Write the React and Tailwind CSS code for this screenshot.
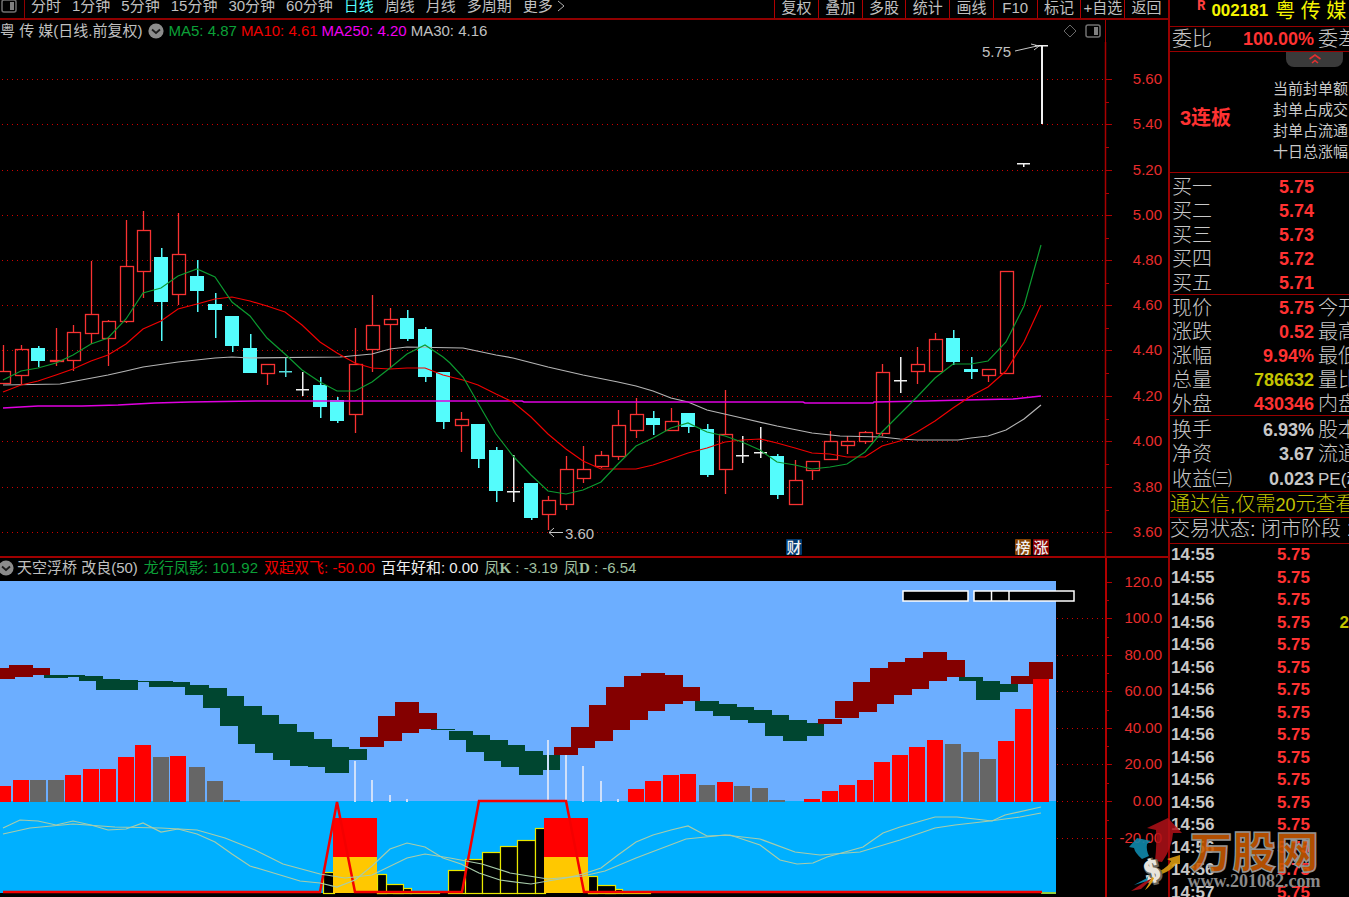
import React from "react";

const X = [
  3, 21, 38, 56, 73, 91, 108, 126, 143, 161, 178, 197, 215, 232, 250, 267, 285, 302, 320, 337,
  355, 372, 390, 407, 425, 443, 461, 478, 496, 513, 531, 548, 566, 583, 601, 618, 636, 653, 671, 688,
  707, 725, 742, 760, 777, 795, 812, 830, 847, 865, 882, 900, 917, 935, 953, 971, 988, 1006, 1023, 1041,
];

// kind, high, body top, body bottom, low
const CANDLES = [
  ["r", 345, 371, 383, 384], ["r", 345, 349, 375, 384], ["c", 346, 348, 361, 367], ["r", 328, 360, 361, 366],
  ["r", 325, 332, 360, 371], ["r", 261, 314, 333, 344], ["r", 320, 321, 338, 366], ["r", 220, 266, 321, 323],
  ["r", 211, 230, 271, 298], ["c", 248, 257, 302, 341], ["r", 213, 254, 294, 305], ["c", 260, 276, 291, 312],
  ["c", 293, 304, 310, 338], ["c", 316, 316, 346, 352], ["c", 334, 348, 373, 373], ["r", 364, 364, 373, 385],
  ["x", 358, 371, 372, 377], ["w", 372, 389, 389, 396], ["c", 377, 385, 407, 418], ["c", 397, 400, 421, 423],
  ["r", 328, 364, 414, 433], ["r", 295, 325, 349, 372], ["r", 308, 319, 324, 368], ["c", 310, 318, 339, 341],
  ["c", 327, 329, 377, 382], ["c", 372, 372, 422, 429], ["r", 412, 419, 425, 452], ["c", 424, 424, 459, 468],
  ["c", 447, 450, 491, 502], ["w", 455, 491, 491, 502], ["c", 483, 483, 518, 520], ["r", 496, 500, 514, 530],
  ["r", 456, 469, 504, 510], ["r", 446, 469, 478, 483], ["r", 451, 455, 466, 468], ["r", 410, 425, 456, 460],
  ["r", 398, 414, 430, 438], ["c", 411, 418, 425, 435], ["r", 408, 421, 430, 430], ["c", 413, 413, 427, 433],
  ["c", 424, 429, 475, 477], ["r", 390, 434, 469, 494], ["w", 436, 455, 455, 463], ["w", 427, 452, 452, 458],
  ["c", 454, 456, 495, 499], ["r", 460, 480, 504, 504], ["r", 461, 461, 470, 480], ["r", 431, 441, 459, 459],
  ["r", 436, 441, 445, 454], ["r", 431, 432, 441, 444], ["r", 364, 372, 433, 436], ["w", 357, 380, 380, 393],
  ["r", 347, 364, 371, 384], ["r", 333, 339, 371, 371], ["c", 330, 338, 362, 365], ["c", 357, 369, 372, 379],
  ["r", 369, 369, 375, 382], ["r", 271, 271, 373, 373], ["w", 163, 163, 163, 167], ["w", 45, 45, 45, 124],
];

const MA5 =
  "3,380 21,371 38,368 56,363 73,355 91,344 108,338 126,319 143,293 161,288 178,276 197,269 215,277 232,302 250,316 267,338 285,354 302,370 320,382 337,391 355,391 372,382 390,368 407,354 425,345 443,357 450,363 463,377 478,403 496,434 513,456 531,475 548,491 566,494 583,490 601,482 618,464 636,446 653,438 671,428 688,423 707,432 725,436 742,442 760,450 777,462 795,465 812,469 830,467 847,464 865,452 882,432 900,414 917,397 935,378 953,364 971,364 988,361 1006,342 1024,306 1041,245";
const MA10 =
  "3,392 21,385 38,381 56,375 73,369 91,361 108,355 126,344 143,329 161,321 178,309 197,304 215,299 232,297 250,301 267,306 285,312 302,325 320,342 337,353 355,363 372,368 390,369 407,368 425,368 443,375 463,380 478,385 496,394 513,402 531,417 548,434 566,449 583,461 601,469 636,469 653,465 671,459 688,453 707,448 725,442 742,440 760,439 777,443 795,448 812,453 830,454 847,457 865,457 882,446 900,441 917,432 935,421 953,408 971,396 988,387 1006,371 1024,342 1041,305";
const MA30 =
  "3,385 60,384 108,375 126,371 143,367 178,362 215,358 232,357 250,358 340,357 372,354 390,349 407,347 463,348 496,355 513,358 548,367 583,375 618,382 636,386 653,391 671,398 688,402 707,410 742,418 777,426 812,433 840,436 882,437 900,439 917,440 958,440 971,438 988,436 1006,430 1024,419 1041,405";
const MA250 =
  "3,408 38,406 82,406 118,405 155,403 190,402 258,401 522,401 524,402 803,402 805,403 873,403 874,402 926,401 965,400 1013,399 1041,396";

const PRICE_TICKS = [
  [79, "5.60"], [124, "5.40"], [170, "5.20"], [215, "5.00"], [260, "4.80"], [305, "4.60"],
  [350, "4.40"], [396, "4.20"], [441, "4.00"], [487, "3.80"], [532, "3.60"],
];
const IND_TICKS = [
  [582, "120.0"], [618, "100.0"], [655, "80.00"], [691, "60.00"], [728, "40.00"], [764, "20.00"], [801, "0.00"], [838, "-20.00"],
];

// colour (r = maroon, g = dark green), top, bottom
const BRIDGE = [
  ["r", 668, 679], ["r", 665, 677], ["r", 668, 675], ["g", 675, 678], ["g", 675, 677], ["g", 676, 681], ["g", 679, 690],
  ["g", 680, 690], ["g", 681, 682], ["g", 681, 687], ["g", 682, 687], ["g", 685, 695], ["g", 688, 708], ["g", 696, 726],
  ["g", 706, 744], ["g", 715, 753], ["g", 724, 760], ["g", 732, 766], ["g", 739, 767], ["g", 747, 773], ["g", 749, 760],
  ["r", 737, 747], ["r", 716, 741], ["r", 702, 733], ["r", 713, 729], ["g", 729, 730], ["g", 731, 740], ["g", 735, 752],
  ["g", 740, 761], ["g", 745, 767], ["g", 751, 775], ["g", 755, 770], ["r", 747, 755], ["r", 727, 748], ["r", 705, 741],
  ["r", 687, 730], ["r", 676, 720], ["r", 673, 711], ["r", 675, 704], ["r", 687, 701], ["g", 701, 711], ["g", 704, 716],
  ["g", 707, 720], ["g", 710, 723], ["g", 715, 736], ["g", 720, 741], ["g", 723, 736], ["r", 719, 724], ["r", 701, 718],
  ["r", 682, 712], ["r", 668, 704], ["r", 662, 695], ["r", 658, 689], ["r", 652, 681], ["r", 660, 677], ["g", 677, 681],
  ["g", 681, 700], ["g", 684, 692], ["r", 676, 684], ["r", 662, 679],
];

// candle index, colour, top
const BARS = [
  [0, "r", 786], [1, "r", 780], [2, "g", 780], [3, "g", 780], [4, "r", 775], [5, "r", 769], [6, "r", 769], [7, "r", 757],
  [8, "r", 745], [9, "g", 757], [10, "r", 756], [11, "g", 767], [12, "g", 781], [13, "g", 800],
  [36, "r", 789], [37, "r", 781], [38, "r", 775], [39, "r", 774], [40, "g", 785], [41, "r", 782], [42, "g", 786],
  [43, "g", 788], [44, "g", 800], [46, "r", 799], [47, "r", 791], [48, "r", 785], [49, "r", 780], [50, "r", 762],
  [51, "r", 755], [52, "r", 747], [53, "r", 740], [54, "g", 744], [55, "g", 752], [56, "g", 759], [57, "r", 741],
  [58, "r", 709], [59, "r", 679],
];

const STICKS = [
  [355, 761], [372, 780], [390, 795], [407, 799], [548, 740], [566, 755], [583, 766], [601, 781], [618, 799],
];

// x, width, top of the black steps
const STEPS = [
  [323, 11, 872], [410, 29, 891], [393, 18, 888], [377, 26, 884], [377, 9, 874],
  [448, 17, 870], [465, 17, 859], [482, 18, 852], [500, 17, 846], [517, 18, 840], [535, 10, 828],
  [622, 28, 891], [605, 17, 889], [588, 27, 885], [588, 9, 876],
];

const K_LINE =
  "3,828 20,820 38,821 56,825 73,821 91,825 108,830 126,829 143,823 161,832 178,829 197,834 215,842 232,854 250,866 267,871 300,881 320,883 337,887 355,880 372,866 390,849 407,843 425,847 443,858 461,864 479,873 500,880 531,884 548,881 566,878 583,874 601,868 618,855 636,842 653,835 671,830 688,826 707,836 730,835 760,845 780,860 797,864 813,863 827,857 863,847 883,833 900,827 935,817 957,817 975,819 992,821 1005,815 1041,807";
const D_LINE =
  "3,834 30,828 73,824 115,827 161,828 197,830 225,838 255,850 283,864 320,874 345,878 372,875 407,858 425,854 450,858 482,864 510,873 548,879 583,876 605,871 636,858 686,839 725,835 760,839 795,852 820,855 860,852 900,840 935,828 955,825 990,821 1020,817 1041,813";

const PERIODS = ["分时", "1分钟", "5分钟", "15分钟", "30分钟", "60分钟", "日线", "周线", "月线", "多周期"];
const TOOLS = ["复权", "叠加", "多股", "统计", "画线", "F10", "标记", "+自选", "返回"];

function Candle({ x, d }) {
  const [kind, high, top, bottom, low] = d;
  if (kind === "w" || kind === "x") {
    const color = kind === "w" ? "#f0f0f0" : "#54dcdc";
    return (
      <g fill={color}>
        <rect x={x} y={high} width={kind === "w" && low - high > 60 ? 2 : 1.5} height={low - high} />
        <rect x={x - 6} y={top} width="13" height="1.5" />
      </g>
    );
  }
  if (kind === "c") {
    return (
      <g fill="#54fcfc">
        <rect x={x} y={high} width="1.5" height={low - high} />
        <rect x={x - 7} y={top} width="14" height={bottom - top} />
      </g>
    );
  }
  return (
    <g stroke="#f83232" fill="none" strokeWidth="1.3">
      <path d={`M${x + 0.5} ${high}V${top}M${x + 0.5} ${bottom}V${low}`} />
      <rect x={x - 5.5} y={top + 0.5} width="13" height={bottom - top} />
    </g>
  );
}

function Axis({ ticks }) {
  return (
    <g>
      {ticks.map(([y, label], i) => (
        <g key={label}>
          <path d={`M1106 ${y + 0.5}h6`} stroke="#b00000" />
          {i < ticks.length - 1 && <path d={`M1106 ${Math.round((y + ticks[i + 1][0]) / 2) + 0.5}h3`} stroke="#b00000" />}
          <text x="1162" y={y + 5} textAnchor="end" fontSize="15" fill="#e82c2c">
            {label}
          </text>
        </g>
      ))}
    </g>
  );
}

function Badge({ x, fill, children }) {
  return (
    <g>
      <rect x={x} y="539" width="16" height="16" rx="1" fill={fill} />
      <text x={x + 8} y="553" textAnchor="middle" fontSize="15" fontWeight="500" fill="#f0f0f0">
        {children}
      </text>
    </g>
  );
}

function PriceChart() {
  return (
    <svg viewBox="0 42 1168 514" className="block h-auto w-full" role="img" aria-label="日线">
      {PRICE_TICKS.map(([y]) => (
        <path key={y} d={`M2 ${y + 0.5}H1105`} stroke="#d00000" strokeDasharray="1 4" />
      ))}
      <path d="M1105.5 42V556" stroke="#a80000" strokeWidth="1.5" />
      <Axis ticks={PRICE_TICKS} />
      {CANDLES.map((d, i) => (
        <Candle key={i} x={X[i]} d={d} />
      ))}
      <g fill="none" strokeWidth="1.2">
        <polyline points={MA30} stroke="#b4b4b4" />
        <polyline points={MA250} stroke="#e000e0" strokeWidth="1.5" />
        <polyline points={MA10} stroke="#f00000" />
        <polyline points={MA5} stroke="#0c9a30" />
      </g>
      <g stroke="#c8c8c8" fill="none">
        <path d="M1015 51L1037 46M1031 44L1039 46L1034 50" />
        <path d="M549 532.5H563M554 528L549 532.5L554 537" />
      </g>
      <g fontSize="15" fill="#c0c0c0">
        <text x="982" y="57">5.75</text>
        <text x="565" y="539">3.60</text>
      </g>
      <Badge x={786} fill="#003a70">财</Badge>
      <Badge x={1015} fill="#864300">榜</Badge>
      <Badge x={1033} fill="#860000">涨</Badge>
    </svg>
  );
}

function IndicatorChart() {
  return (
    <svg viewBox="0 581 1168 316" className="block h-auto w-full overflow-visible" role="img" aria-label="天空浮桥">
      <rect x="0" y="581" width="1056" height="221" fill="#6caeff" />
      <rect x="0" y="801" width="1056" height="92" fill="#00b0ff" />
      {IND_TICKS.slice(1).map(([y]) => (
        <path key={y} d={`M1057 ${y + 0.5}H1105`} stroke="#d00000" strokeDasharray="1 4" />
      ))}
      <path d="M1106 581V897" stroke="#b00000" strokeWidth="2" />
      <Axis ticks={IND_TICKS} />
      <g shapeRendering="crispEdges">
        {BRIDGE.map(([c, t, b], i) => (
          <rect key={i} x={X[i] - 12} y={t} width="24" height={b - t} fill={c === "r" ? "#840000" : "#004630"} />
        ))}
        {BARS.map(([i, c, t]) => (
          <rect key={i} x={X[i] - 8} y={t} width="16" height={802 - t} fill={c === "r" ? "#ff0000" : "#666666"} />
        ))}
      </g>
      {STICKS.map(([x, y]) => (
        <rect key={x} x={x - 1} y={y} width="2" height={802 - y} fill="#cfe0fa" />
      ))}
      <g stroke="#e8e800" strokeWidth="1.2" fill="#000000">
        {STEPS.map(([x, w, y]) => (
          <rect key={`${x}-${y}`} x={x + 0.5} y={y + 0.5} width={w} height={893 - y} />
        ))}
      </g>
      <rect x="1041" y="892" width="15" height="2" fill="#90d040" />
      {[333, 544].map((x) => (
        <g key={x}>
          <rect x={x} y="818" width="44" height="40" fill="#ff0000" />
          <rect x={x} y="857" width="44" height="36" fill="#ffc800" />
        </g>
      ))}
      <polyline
        points="3,892 320,892 337,802 355,892 462,892 479,801 566,801 584,892 1042,892"
        fill="none"
        stroke="#f40000"
        strokeWidth="2.5"
      />
      <g fill="none" stroke="#a8ccaa" strokeWidth="1.2">
        <polyline points={K_LINE} />
        <polyline points={D_LINE} />
      </g>
      <g fill="#000000" stroke="#ffffff" strokeWidth="1.5">
        <rect x="903" y="591" width="65" height="10" />
        <rect x="974" y="591" width="100" height="10" />
        <path d="M991.5 591V601M1009 591V601" />
      </g>
    </svg>
  );
}

function CollapseIcon() {
  return (
    <svg viewBox="0 0 16 16" className="block size-4" aria-hidden="true">
      <circle cx="8" cy="8" r="7.6" fill="#8c8c8c" />
      <path d="M4 6.5L8 10L12 6.5" fill="none" stroke="#1c1c1c" strokeWidth="1.8" />
    </svg>
  );
}

function PaneIcon() {
  return (
    <svg viewBox="0 0 16 14" className="h-[14px] w-4" aria-hidden="true">
      <rect x="1" y="1" width="14" height="12" rx="2" fill="none" stroke="#707070" strokeWidth="1.5" />
      <rect x="9" y="3" width="4" height="8" fill="#808080" />
    </svg>
  );
}

function Row({ label, value, color, next }) {
  return (
    <div className="grid grid-cols-[60px_82px_auto] items-center whitespace-nowrap pl-[2px] leading-6">
      <span className="text-[20px] font-light text-[#c8c8c8]">{label}</span>
      <span className={`text-right text-[18px] font-bold ${color}`}>{value}</span>
      <span className="pl-1 text-[20px] font-light text-[#c8c8c8]">{next}</span>
    </div>
  );
}

const RED = "text-[#ff3232]";
const GREY = "text-[#c8c8c8]";

const BIDS = [["买一", "5.75"], ["买二", "5.74"], ["买三", "5.73"], ["买四", "5.72"], ["买五", "5.71"]];
const QUOTES = [
  ["现价", "5.75", RED, "今开"],
  ["涨跌", "0.52", RED, "最高"],
  ["涨幅", "9.94%", RED, "最低"],
  ["总量", "786632", "text-[#c4c400]", "量比"],
  ["外盘", "430346", RED, "内盘"],
];
const FUNDAMENTALS = [
  ["换手", "6.93%", GREY, "股本"],
  ["净资", "3.67", GREY, "流通"],
];
const TIMES = ["14:55", "14:55", ...Array(13).fill("14:56"), "14:57"];

function QuotePanel() {
  return (
    <aside className="flex w-[181px] shrink-0 flex-col overflow-hidden border-l-2 border-[#980000]">
      <h1 className="flex h-[26px] shrink-0 items-center whitespace-nowrap pb-1 pl-[27px] text-[#f4f400]">
        <span className="self-start font-['Liberation_Mono',monospace] text-[14px] font-bold leading-3 text-[#ff4040]">R</span>
        <span className="pl-[6px] text-[17px] font-bold leading-5">002181</span>
        <span className="pl-[7px] text-[20px] font-normal leading-5">粤 传 媒</span>
      </h1>
      <div className="h-[26px] shrink-0 border-y border-[#980000]">
        <Row label="委比" value="100.00%" color={RED} next="委差" />
      </div>
      <section className="h-[121px] shrink-0 border-b border-[#980000]">
        <button type="button" aria-label="收起" className="ml-[116px] flex h-[15px] w-[57px] justify-center rounded-b-lg bg-[#3a3a3a]">
          <svg viewBox="0 0 14 12" className="mt-[1px] h-3 w-[14px]" aria-hidden="true">
            <path d="M1.5 6L7 2L12.5 6M4 10L7 7.5L10 10" fill="none" stroke="#e03030" strokeWidth="1.6" />
          </svg>
        </button>
        <div className="flex items-center whitespace-nowrap pl-[10px] pt-[11px]">
          <strong className="w-[93px] pb-1 text-[20px] font-bold leading-6 text-[#ff3232]">3连板</strong>
          <ul className="text-[15px] leading-[21px] text-[#c8c8c8]">
            <li>当前封单额</li>
            <li>封单占成交</li>
            <li>封单占流通</li>
            <li>十日总涨幅</li>
          </ul>
        </div>
      </section>
      <div className="h-[122px] shrink-0 border-b border-[#980000] pt-[2px]">
        {BIDS.map(([label, value]) => (
          <Row key={label} label={label} value={value} color={RED} />
        ))}
      </div>
      <div className="h-[121px] shrink-0 border-b border-[#980000] pt-[1px]">
        {QUOTES.map(([label, value, color, next]) => (
          <Row key={label} label={label} value={value} color={color} next={next} />
        ))}
      </div>
      <div className="h-[76px] shrink-0 border-b border-[#980000] pt-[2px]">
        {FUNDAMENTALS.map(([label, value, color, next]) => (
          <Row key={label} label={label} value={value} color={color} next={next} />
        ))}
        <Row label="收益㈢" value="0.023" color={GREY} next={<b className="text-[17px]">PE(动)</b>} />
      </div>
      <a href="#query" className="h-[26px] shrink-0 whitespace-nowrap border-b border-[#980000] text-[20px] font-light leading-6 text-[#c4c400]">
        通达信,仅需<b className="text-[18px]">20</b>元查看
      </a>
      <p className="h-[26px] shrink-0 whitespace-nowrap border-b border-[#980000] text-[20px] font-light leading-[22px] text-[#c8c8c8]">
        交易状态: 闭市阶段 1
      </p>
      <table className="h-[360px] w-full shrink-0 border-collapse text-[17px] font-bold leading-5">
        <tbody>
          {TIMES.map((time, i) => (
            <tr key={i}>
              <td className="w-[60px] p-0 pl-[1px] text-[#c8c8c8]">{time}</td>
              <td className="w-20 p-0 text-right text-[#ff3232]">5.75</td>
              <td className="p-0 text-right text-[#c4c400]">{i === 3 ? "2" : ""}</td>
            </tr>
          ))}
        </tbody>
      </table>
    </aside>
  );
}

function Watermark() {
  return (
    <svg viewBox="1128 814 196 83" className="pointer-events-none absolute bottom-0 right-[25px] h-[83px] w-[196px]" aria-hidden="true">
      <path d="M1155 861Q1157 843 1156 830L1147 828L1168 818L1182 833L1173 833Q1172 848 1162 862Z" fill="#b01018" opacity="0.85" />
      <path d="M1142 859Q1135 853 1134 848L1129 847L1137 838L1151 841L1147 844Q1146 850 1149 856Z" fill="#1088ac" opacity="0.9" />
      <path d="M1160 871Q1169 866 1171 861L1167 859L1180 855L1180 864L1176 864Q1172 870 1162 874Z" fill="#d89a10" opacity="0.9" />
      <g transform="rotate(-14 1152 871)" textAnchor="middle" fontSize="29" fontWeight="bold" className="font-['Liberation_Serif',serif]">
        <text x="1153" y="881" fill="#6c6860" stroke="#6c6860" strokeWidth="4">
          $
        </text>
        <text x="1152" y="880" fill="#e8e4dc" stroke="#e8e4dc" strokeWidth="1.5">
          $
        </text>
      </g>
      <path d="M1153 878L1141 889L1131 891L1146 881Z" fill="#a01018" />
      <path d="M1147 881L1134 885L1147 878L1149 874Z" fill="#1088ac" />
      <path d="M1154 878Q1151 886 1145 890Q1149 884 1152 877Z" fill="#d89a10" />
      <text x="1254" y="868" fontSize="43" fontWeight="900" textAnchor="middle" fill="#cc5a00" stroke="#949494" strokeWidth="1.5" fillOpacity="0.9">
        万股网
      </text>
      <text x="1254" y="887" fontSize="18" fontWeight="bold" textAnchor="middle" fill="#8a8a8a" className="font-['Liberation_Serif',serif]">
        www.201082.com
      </text>
    </svg>
  );
}

export default function App() {
  return (
    <div className="relative flex h-screen overflow-hidden bg-black font-['Liberation_Sans','Noto_Sans_CJK_SC',sans-serif] text-[#c0c0c0]">
      <main className="min-w-0 flex-1">
        <nav className="flex h-5 items-stretch overflow-hidden whitespace-nowrap border-b-2 border-[#900000] text-[15px] leading-4">
          <div className="flex w-[25px] items-start border-r border-[#900000] pl-[1px]">
            <button type="button" aria-label="侧栏" className="-mt-[1px]">
              <PaneIcon />
            </button>
          </div>
          <div className="flex flex-1 items-end gap-[11px] pb-1 pl-[6px]">
            {PERIODS.map((p) => (
              <button key={p} type="button" className={p === "日线" ? "text-[#54fcfc]" : "text-[#c0c0c0]"}>
                {p}
              </button>
            ))}
            <button type="button" className="flex items-center gap-1">
              更多
              <svg viewBox="0 0 8 12" className="h-3 w-2" aria-hidden="true">
                <path d="M1 1L7 6L1 11" fill="none" stroke="#b0b0b0" />
              </svg>
            </button>
          </div>
          <div className="grid w-[394px] grid-cols-9">
            {TOOLS.map((t) => (
              <button key={t} type="button" className="flex items-end justify-center border-l border-[#b00000] pb-1">
                {t}
              </button>
            ))}
          </div>
        </nav>

        <header className="flex h-[22px] text-[15px] leading-[22px]">
          <div className="flex flex-1 items-center whitespace-nowrap">
            <h2>粤 传 媒(日线.前复权)</h2>
            <button type="button" aria-label="指标" className="mx-[5px]">
              <CollapseIcon />
            </button>
            <div className="flex flex-1 gap-1">
              <span className="text-[#0ca038]">MA5: 4.87</span>
              <span className="text-[#f00000]">MA10: 4.61</span>
              <span className="text-[#f000f0]">MA250: 4.20</span>
              <span>MA30: 4.16</span>
            </div>
            <div className="flex items-center gap-2 pr-1">
              <button type="button" aria-label="标记">
                <svg viewBox="0 0 14 14" className="size-[14px]" aria-hidden="true">
                  <path d="M7 1L13 7L7 13L1 7Z" fill="none" stroke="#686868" />
                </svg>
              </button>
              <button type="button" aria-label="右侧栏">
                <PaneIcon />
              </button>
            </div>
          </div>
          <div className="w-[63px] border-l border-[#a80000]" />
        </header>
        <PriceChart />

        <header className="flex h-[25px] border-t-2 border-[#a00000] text-[15px] leading-5">
          <div className="flex flex-1 items-start gap-[6px] whitespace-nowrap">
            <h2 className="flex items-center">
              <button type="button" aria-label="指标" className="-ml-[2px] mr-[3px]">
                <CollapseIcon />
              </button>
              天空浮桥 改良(50)
            </h2>
            <span className="text-[#0ca038]">龙行凤影: 101.92</span>
            <span className="text-[#f00000]">双起双飞: -50.00</span>
            <span className="text-[#f0f0f0]">百年好和: 0.00</span>
            <span className="text-[#a0c0a0]">
              凤<b className="font-['Liberation_Serif',serif]">K</b> : -3.19
            </span>
            <span className="text-[#a0c0a0]">
              凤<b className="font-['Liberation_Serif',serif]">D</b> : -6.54
            </span>
          </div>
          <div className="w-[63px] border-l-2 border-[#b00000]" />
        </header>
        <IndicatorChart />
      </main>
      <QuotePanel />
      <Watermark />
    </div>
  );
}
